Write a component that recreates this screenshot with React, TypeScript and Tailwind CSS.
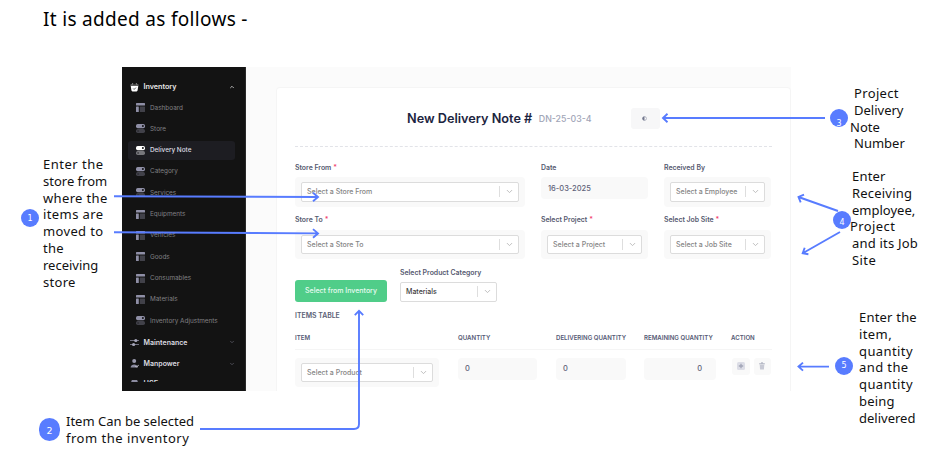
import React from 'react';
import { ChevronDown, ChevronUp } from 'lucide-react';

type IconKind = 'layout' | 'toggle';

const menu: { label: string; icon: IconKind; active?: boolean }[] = [
  { label: 'Dashboard', icon: 'layout' },
  { label: 'Store', icon: 'toggle' },
  { label: 'Delivery Note', icon: 'toggle', active: true },
  { label: 'Category', icon: 'toggle' },
  { label: 'Services', icon: 'toggle' },
  { label: 'Equipments', icon: 'layout' },
  { label: 'Vehicles', icon: 'layout' },
  { label: 'Goods', icon: 'layout' },
  { label: 'Consumables', icon: 'layout' },
  { label: 'Materials', icon: 'layout' },
  { label: 'Inventory Adjustments', icon: 'toggle' },
];

function ItemIcon({ kind, active }: { kind: IconKind; active?: boolean }) {
  const light = active ? '#ffffff' : '#8f8fa6';
  const dim = active ? '#77777c' : '#414149';
  if (kind === 'layout') {
    return (
      <svg viewBox="0 0 9 9" className="h-[9px] w-[9px] shrink-0">
        <rect x="0" y="0" width="9" height="2.6" rx=".5" fill={light} />
        <rect x="0" y="3.5" width="2.8" height="5.5" rx=".5" fill={light} />
        <rect x="3.8" y="3.5" width="5.2" height="5.5" rx=".5" fill={dim} />
      </svg>
    );
  }
  return (
    <svg viewBox="0 0 9 9" className="h-[9px] w-[9px] shrink-0">
      <rect x="0" y="0" width="9" height="4.2" rx="1.7" fill={light} />
      <circle cx="6.9" cy="2.1" r="1" fill="#131316" />
      <rect x="0" y="5" width="9" height="4" rx="1.7" fill={dim} />
      <circle cx="2.1" cy="7" r=".8" fill="#242428" />
    </svg>
  );
}

function Sidebar() {
  return (
    <nav className="flex h-full w-[124px] shrink-0 flex-col overflow-hidden border-r border-[#2a2a2a] bg-[#131313] pt-[9px]">
      <div className="flex h-[21px] shrink-0 items-center pl-[8px] pr-[10px]">
        <svg viewBox="0 0 10 10" className="h-[10px] w-[9px]">
          <path d="M.8 3.8h8.4L8.4 9a1.2 1.2 0 0 1-1.1.9H2.7A1.2 1.2 0 0 1 1.6 9Z" fill="#fff" />
          <path d="M.4 2.9h9.2M2.2 2.6 3.2.6M7.8 2.6 6.8.6" stroke="#aaa" strokeWidth=".9" />
          <path d="m3.6 6.7 1 1 1.9-2" stroke="#222" strokeWidth=".8" fill="none" />
        </svg>
        <span className="ml-[4.5px] flex-1 pt-[2px] text-[7.2px] font-semibold text-[#e8e8e8]">Inventory</span>
        <ChevronUp className="h-[6px] w-[6px] text-[#c9c9c9]" strokeWidth={3.4} />
      </div>
      {menu.map((m) => (
        <div key={m.label} className="flex h-[21.3px] shrink-0 items-center px-[6px]">
          <div className={'flex h-[19px] w-[107px] items-center gap-[5px] rounded-[3px] pl-[8px] ' + (m.active ? 'bg-[#1d1d22]' : '')}>
            <ItemIcon kind={m.icon} active={m.active} />
            <span className={'whitespace-nowrap pt-[1.5px] text-[6.4px] ' + (m.active ? 'font-medium text-[#dedee2]' : 'text-[#808083]')}>{m.label}</span>
          </div>
        </div>
      ))}
      <div className="flex h-[21.6px] shrink-0 items-center pl-[8px] pr-[10px]">
        <svg viewBox="0 0 9 9" className="h-[9px] w-[9px]">
          <path d="M0 2.5h9M0 6.5h9" stroke="#707080" strokeWidth="1" />
          <circle cx="5.8" cy="2.5" r="1.6" fill="#a5a5b8" />
          <circle cx="3.6" cy="6.5" r="1.6" fill="#a5a5b8" />
        </svg>
        <span className="ml-[4.5px] flex-1 pt-[2px] text-[7px] font-semibold text-[#dcdce0]">Maintenance</span>
        <ChevronDown className="h-[6px] w-[6px] text-[#55555f]" strokeWidth={3.4} />
      </div>
      <div className="flex h-[21.3px] shrink-0 items-center pl-[8px] pr-[10px]">
        <svg viewBox="0 0 9 9" className="h-[9px] w-[9px]">
          <circle cx="4.2" cy="2" r="2" fill="#9a9aad" />
          <path d="M.6 8.4c0-4 7.2-4 7.2 0Z" fill="#8b8ba0" />
          <path d="m5.5 7.2 1 1L8.8 5.8" stroke="#d8d8e0" strokeWidth=".9" fill="none" />
        </svg>
        <span className="ml-[4.5px] flex-1 pt-[2px] text-[7px] font-semibold text-[#dcdce0]">Manpower</span>
        <ChevronDown className="h-[6px] w-[6px] text-[#55555f]" strokeWidth={3.4} />
      </div>
      <div className="mt-[5px] flex h-[3px] shrink-0 items-start overflow-hidden pl-[8px]">
        <svg viewBox="0 0 9 4" className="mt-[1px] h-[3px] w-[9px]">
          <path d="M1 0h7l1 2.5H0Z" fill="#8b8ba0" />
        </svg>
        <span className="ml-[4.5px] mt-px text-[7.3px] font-semibold leading-[7px] text-[#dcdce0]">HSE</span>
      </div>
    </nav>
  );
}

function Select({ text, dark }: { text: string; dark?: boolean }) {
  return (
    <div className="flex h-[19.5px] w-full items-center rounded-[2px] border border-[#dcdcdc] bg-white pl-[5px]">
      <span className={'flex-1 whitespace-nowrap pt-[1.5px] text-[7px] font-medium ' + (dark ? 'text-[#3c3c3c]' : 'text-[#858585]')}>{text}</span>
      <span className="h-[11px] w-px bg-[#dedede]" />
      <span className="flex w-[18px] justify-center">
        <ChevronDown className="h-[9px] w-[9px] text-[#bdbdbd]" strokeWidth={2.6} />
      </span>
    </div>
  );
}

function Label({ text, required }: { text: string; required?: boolean }) {
  return (
    <div className="flex h-[10px] items-center whitespace-nowrap pt-[1.5px] text-[6.9px] font-semibold text-[#55596f]">
      {text}
      {required && <span className="ml-[2px] text-[#f1416c]">*</span>}
    </div>
  );
}

function SelectField({ label, text, required }: { label: string; text: string; required?: boolean }) {
  return (
    <div>
      <Label text={label} required={required} />
      <div className="mt-[5px] rounded-[4px] bg-[#f9f9f9] px-[6px] py-[5px]">
        <Select text={text} />
      </div>
    </div>
  );
}

function Value({ children, right }: { children: string; right?: boolean }) {
  return (
    <div className={'flex h-[22px] items-center rounded-[4px] bg-[#f9f9f9] px-[7px] pt-px text-[7.5px] font-medium text-[#5e6278] ' + (right ? 'justify-end pr-[14px]' : '')}>
      {children}
    </div>
  );
}

function Form() {
  return (
    <section className="flex flex-1 flex-col bg-[#fbfbfb] pl-[29.5px] pt-[20px]">
      <div className="flex-1 rounded-t-[4px] border border-b-0 border-[#f5f5f5] bg-white pl-[18.5px] pr-[18px]">
        <div className="flex h-[58.5px] items-center border-b border-dashed border-[#e2e3e8] pl-[112px] pt-[3px]">
          <h2 className="whitespace-nowrap text-[12.7px] font-semibold text-[#1c2440]">New Delivery Note #</h2>
          <span className="ml-[6.5px] w-[92px] whitespace-nowrap pt-px text-[8.8px] font-medium text-[#a1a5b7]">DN-25-03-4</span>
          <div className="flex h-[21px] w-[29px] items-center justify-center rounded-[3px] bg-[#f7f7f8]">
            <svg viewBox="0 0 6 6" className="-ml-[2px] h-[5px] w-[5px]">
              <circle cx="3" cy="3" r="2.3" fill="#fff" stroke="#a5a8b8" strokeWidth="1" />
              <path d="M3 .5a2.5 2.5 0 0 0 0 5Z" fill="#73778d" />
            </svg>
          </div>
        </div>
        <div className="mt-[15.5px] grid grid-cols-[230px_107px_107px] gap-x-[16px] gap-y-[8px]">
          <SelectField label="Store From" text="Select a Store From" required />
          <div>
            <Label text="Date" />
            <div className="mt-[5px]">
              <Value>16-03-2025</Value>
            </div>
          </div>
          <SelectField label="Received By" text="Select a Employee" />
          <SelectField label="Store To" text="Select a Store To" required />
          <SelectField label="Select Project" text="Select a Project" required />
          <SelectField label="Select Job Site" text="Select a Job Site" required />
        </div>
        <div className="mt-[8px] flex items-end gap-[13px]">
          <button className="h-[21.5px] w-[92px] whitespace-nowrap rounded-[3px] bg-[#50cd89] pt-px text-[7px] font-medium text-[#e9fbf1]">Select from Inventory</button>
          <div className="w-[97px]">
            <Label text="Select Product Category" />
            <div className="mt-[5px]">
              <Select text="Materials" dark />
            </div>
          </div>
        </div>
        <div className="mt-[8px] flex h-[10px] items-center pt-[2.5px] text-[6.9px] font-semibold text-[#5a5e74]">ITEMS TABLE</div>
        <div className="mt-[5px] grid h-[25px] grid-cols-[163px_98px_88px_87px_41px] items-center border-b border-[#f5f5f5] pt-[1.5px] text-[6.1px] font-semibold text-[#555a75]">
          <span>ITEM</span>
          <span>QUANTITY</span>
          <span className="whitespace-nowrap">DELIVERING QUANTITY</span>
          <span className="whitespace-nowrap">REMAINING QUANTITY</span>
          <span>ACTION</span>
        </div>
        <div className="mt-[8px] grid grid-cols-[163px_98px_88px_88px_40px] items-start">
          <div className="w-[144px] rounded-[4px] bg-[#f9f9f9] px-[6px] py-[5px]">
            <Select text="Select a Product" />
          </div>
          <div className="w-[79px]"><Value>0</Value></div>
          <div className="w-[70px]"><Value>0</Value></div>
          <div className="w-[72px]"><Value right>0</Value></div>
          <div className="flex gap-[4px]">
            <div className="flex h-[17.5px] w-[17.5px] items-center justify-center rounded-[3px] bg-[#f9f9f9]">
              <svg viewBox="0 0 8 8" className="h-[8px] w-[8px]">
                <rect width="8" height="8" rx="1.6" fill="#dcdde6" />
                <path d="M4 1.8v4.4M1.8 4h4.4" stroke="#a1a5b7" strokeWidth="1.3" />
              </svg>
            </div>
            <div className="flex h-[17.5px] w-[17.5px] items-center justify-center rounded-[3px] bg-[#f9f9f9]">
              <svg viewBox="0 0 8 8" className="h-[8px] w-[8px]">
                <path d="M1.7 2.8h4.6L5.9 7.4H2.1Z" fill="#c7c9d4" />
                <path d="M1.2 1.8h5.6M3 .9h2" stroke="#a1a5b7" strokeWidth=".9" />
              </svg>
            </div>
          </div>
        </div>
      </div>
    </section>
  );
}

function Badge({ n, className }: { n: string; className: string }) {
  return (
    <span className={"flex shrink-0 justify-center overflow-hidden rounded-full bg-[#587cff] font-['DejaVu_Sans',sans-serif] text-white " + className}>{n}</span>
  );
}

function Lines({ lines, className }: { lines: { t: string; c?: string }[]; className?: string }) {
  return (
    <div className={'flex flex-col whitespace-nowrap text-[13px] leading-[16.8px] text-[#111] ' + (className ?? '')}>
      {lines.map((l, i) => (
        <span key={i} className={l.c ?? ''}>{l.t}</span>
      ))}
    </div>
  );
}

function Arrows() {
  return (
    <svg viewBox="0 0 943 461" className="pointer-events-none absolute left-0 top-0 h-[461px] w-[943px]" fill="none" stroke="#587cff" strokeWidth="1.9">
      <path d="M114 196.3 318 197M313 192.7l5 4.3-5 4.3" />
      <path d="M114 232.2 318 233.4M313 229.1l5 4.3-5 4.3" />
      <path d="M200 429H354Q359 429 359 424V311M354.8 315.2l4.2-4.3 4.2 4.3" />
      <path d="M825 118H663M667.5 113.8l-4.5 4.2 4.5 4.2" />
      <path d="M838 211 798.5 197M804 194.6l-5.5 2.4 2.2 5.3" />
      <path d="M840 232 802.7 253.3M804.7 247.8l-2 5.5 5.7 1" />
      <path d="M829 366.6H798.5M803 362.6l-4.5 4 4.5 4" />
    </svg>
  );
}

export default function App() {
  return (
    <main className="relative flex h-[461px] w-[943px] flex-col overflow-hidden bg-white font-['Noto_Sans',sans-serif]">
      <h1 className="h-[67px] shrink-0 whitespace-nowrap pl-[43px] pt-[6px] text-[19px] leading-[26px] tracking-[0.31px] text-black">It is added as follows -</h1>
      <div className="flex h-[324px] shrink-0">
        <aside className="flex w-[122px] shrink-0 items-start pl-[21px] pt-[89px]">
          <Badge n="1" className="mt-[53px] h-[18px] w-[18px] text-[8px] leading-[19px]" />
          <Lines
            className="ml-[4px]"
            lines={[
              { t: 'Enter the', c: 'tracking-[0.5px]' },
              { t: 'store from' },
              { t: 'where the', c: 'tracking-[0.35px]' },
              { t: 'items are', c: 'tracking-[0.4px]' },
              { t: 'moved to', c: 'tracking-[0.35px]' },
              { t: 'the', c: 'tracking-[0.3px]' },
              { t: 'receiving' },
              { t: 'store', c: 'tracking-[0.3px]' },
            ]}
          />
        </aside>
        <div className="flex w-[669px] shrink-0 overflow-hidden font-['Inter',sans-serif]">
          <Sidebar />
          <Form />
        </div>
        <aside className="flex w-[152px] shrink-0 flex-col">
          <div className="flex h-[83px] shrink-0 pl-[39px] pt-[18px]">
            <Badge n="3" className="mt-[24px] h-[18px] w-[18px] text-[8px] leading-[30px]" />
            <Lines
              className="ml-[6px]"
              lines={[{ t: 'Project', c: 'tracking-[0.35px]' }, { t: 'Delivery' }, { t: 'Note', c: '-ml-[4px]' }, { t: 'Number' }]}
            />
          </div>
          <div className="flex h-[141px] shrink-0 pl-[42px] pt-[18px]">
            <Badge n="4" className="mt-[43px] h-[18px] w-[18px] text-[8px] leading-[23px]" />
            <Lines
              className="ml-px"
              lines={[
                { t: 'Enter', c: 'tracking-[0.2px]' },
                { t: 'Receiving', c: 'tracking-[0.2px]' },
                { t: 'employee,' },
                { t: 'Project', c: '-ml-[2px] tracking-[0.4px]' },
                { t: 'and its Job', c: 'tracking-[0.2px]' },
                { t: 'Site', c: 'tracking-[0.4px]' },
              ]}
            />
          </div>
          <div className="flex shrink-0 pl-[44px] pt-[18px]">
            <Badge n="5" className="mt-[48px] h-[18px] w-[18px] text-[8px] leading-[18px]" />
            <Lines
              className="ml-[6px]"
              lines={[
                { t: 'Enter the', c: 'tracking-[0.2px]' },
                { t: 'item,', c: 'tracking-[0.4px]' },
                { t: 'quantity', c: 'tracking-[0.4px]' },
                { t: 'and the', c: 'tracking-[0.4px]' },
                { t: 'quantity', c: 'tracking-[0.4px]' },
                { t: 'being', c: 'tracking-[0.2px]' },
                { t: 'delivered' },
              ]}
            />
          </div>
        </aside>
      </div>
      <div className="flex pl-[39px] pt-[22px]">
        <Badge n="2" className="mt-[5px] h-[23px] w-[21px] text-[9.5px] leading-[25px]" />
        <Lines className="ml-[6px]" lines={[{ t: 'Item Can be selected' }, { t: 'from the inventory', c: 'tracking-[0.5px]' }]} />
      </div>
      <Arrows />
    </main>
  );
}
